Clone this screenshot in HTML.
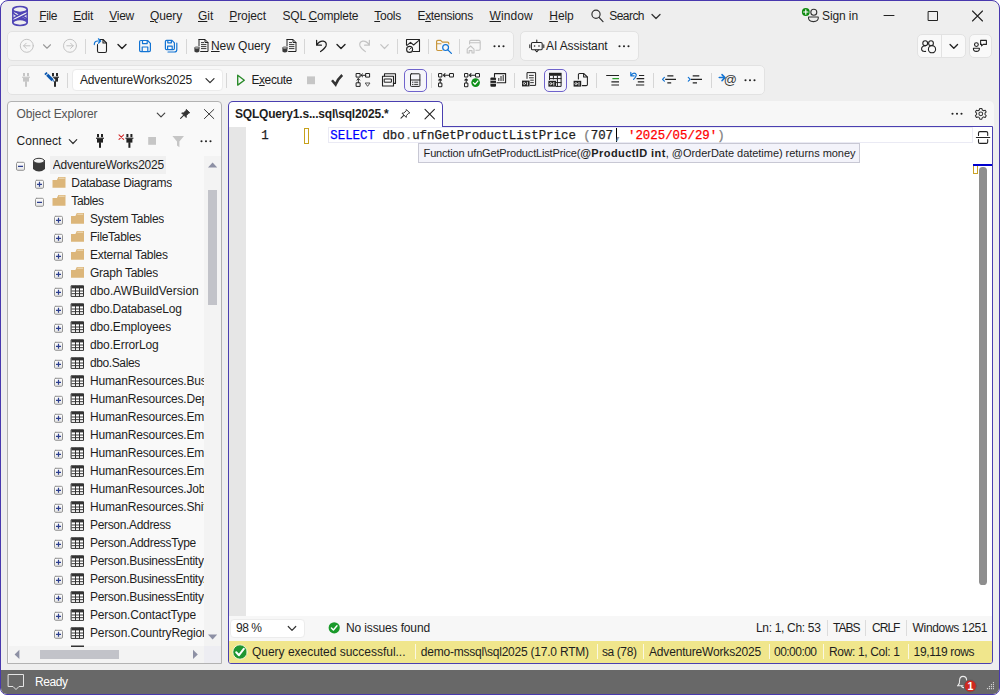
<!DOCTYPE html>
<html lang="en"><head><meta charset="utf-8"><title>SQLQuery1.sql - SSMS</title>
<style>
html,body{margin:0;padding:0;background:#ffffff;}
body{width:1000px;height:695px;overflow:hidden;position:relative;font-family:"Liberation Sans",sans-serif;font-size:12px;color:#1e1e1e;}
#win{position:absolute;left:0;top:0;width:998px;height:693px;border:1px solid #4838ae;border-radius:8px 8px 7px 7px;background:#eeeeee;overflow:hidden;}
#win *{box-sizing:border-box;}
/* every child is positioned in page coordinates: #win content box starts at (1,1) so shift by -1 */
#win > *{position:absolute;margin-left:-1px;margin-top:-1px;}
.t{white-space:pre;display:block;}
.box{background:#f7f7f7;border:1px solid #e2e2e2;border-radius:5px;}
.sep{width:1px;background:#d4d4d4;}
svg{overflow:visible;}
u{text-decoration:underline;text-underline-offset:1px;text-decoration-thickness:1px;}

</style></head><body>
<div id="win">
<div class="box" style="left:7px;top:31px;width:507px;height:30px;"></div>
<div class="box" style="left:520px;top:31px;width:119px;height:30px;"></div>
<div class="box" style="left:7px;top:65px;width:758px;height:30px;"></div>
<div class="box" style="left:917px;top:34px;width:49px;height:24px;background:#f9f9f9;"></div>
<div class="" style="left:941px;top:35px;width:1px;height:22px;background:#e2e2e2;"></div>
<div class="box" style="left:969px;top:34px;width:23px;height:24px;background:#f9f9f9;"></div>
<div class="" style="left:72px;top:69px;width:151px;height:22px;background:#ffffff;border:1px solid #ebebeb;border-radius:4px;"></div>
<div class="" style="left:85px;top:38.5px;width:1px;height:15px;background:#d6d6d6;"></div>
<div class="" style="left:186px;top:38.5px;width:1px;height:15px;background:#d6d6d6;"></div>
<div class="" style="left:304px;top:38.5px;width:1px;height:15px;background:#d6d6d6;"></div>
<div class="" style="left:397px;top:38.5px;width:1px;height:15px;background:#d6d6d6;"></div>
<div class="" style="left:428px;top:38.5px;width:1px;height:15px;background:#d6d6d6;"></div>
<div class="" style="left:459px;top:38.5px;width:1px;height:15px;background:#d6d6d6;"></div>
<div class="" style="left:67px;top:72.5px;width:1px;height:15px;background:#d6d6d6;"></div>
<div class="" style="left:226px;top:72.5px;width:1px;height:15px;background:#d6d6d6;"></div>
<div class="" style="left:403.5px;top:68.5px;width:23.5px;height:23.5px;border:1px solid #6f63cc;border-radius:5px;background:#f5f5fa;"></div>
<div class="" style="left:430.5px;top:72.5px;width:1px;height:15px;background:#d6d6d6;"></div>
<div class="" style="left:513.5px;top:72.5px;width:1px;height:15px;background:#d6d6d6;"></div>
<div class="" style="left:543.5px;top:68.5px;width:23.5px;height:23.5px;border:1px solid #6f63cc;border-radius:5px;background:#f5f5fa;"></div>
<div class="" style="left:596px;top:72.5px;width:1px;height:15px;background:#d6d6d6;"></div>
<div class="" style="left:653px;top:72.5px;width:1px;height:15px;background:#d6d6d6;"></div>
<div class="" style="left:710.5px;top:72.5px;width:1px;height:15px;background:#d6d6d6;"></div>
<div class="" style="left:7px;top:101px;width:215px;height:563px;background:#f9f9f9;border:1px solid #b2b2b2;border-radius:4px 4px 0 0;"></div>
<div class="" style="left:204px;top:156px;width:17px;height:490px;background:#f3f3f3;"></div>
<div class="" style="left:9px;top:646px;width:212px;height:17px;background:#f3f3f3;"></div>
<div class="" style="left:204px;top:646px;width:17px;height:17px;background:#ededf2;"></div>
<div class="" style="left:50px;top:156px;width:116px;height:18px;background:#f0f0f0;"></div>
<div class="" style="left:208px;top:190px;width:9px;height:114.5px;background:#c2c3c9;"></div>
<div class="" style="left:40px;top:650px;width:78.5px;height:9px;background:#c2c3c9;"></div>
<div class="" style="left:228px;top:101px;width:766px;height:26px;background:#f7f7f7;border-radius:5px 5px 0 0;"></div>
<div class="" style="left:228px;top:126px;width:765px;height:538px;background:#ffffff;border:1px solid #4a3fb0;border-radius:0 0 3px 3px;"></div>
<div class="" style="left:228px;top:101px;width:215px;height:26px;background:#ffffff;border:1px solid #4a3fb0;border-bottom:none;border-radius:5px 5px 0 0;"></div>
<div class="" style="left:229px;top:127px;width:17px;height:489px;background:#e6e6e6;"></div>
<div class="" style="left:328px;top:127px;width:645px;height:16px;border:1px solid #eaeaf4;"></div>
<div class="" style="left:304px;top:128px;width:4.6px;height:16px;border:1px solid #c7a11c;"></div>
<div class="" style="left:615.6px;top:128px;width:1px;height:14px;background:#000;"></div>
<div class="" style="left:418px;top:143px;width:442px;height:19.5px;background:#f3f3fa;border:1px solid #c8c8d4;"></div>
<div class="" style="left:973px;top:164px;width:19px;height:2px;background:#0000cd;"></div>
<div class="" style="left:973.4px;top:166px;width:4.6px;height:8px;border:1px solid #c9a227;border-top:none;"></div>
<div class="" style="left:979.4px;top:166.6px;width:7.2px;height:418px;background:#8e8e8e;border-radius:3.6px;"></div>
<div class="" style="left:229px;top:616px;width:763px;height:25px;background:#f7f7f7;"></div>
<div class="" style="left:230px;top:619px;width:74.5px;height:18.5px;background:#ffffff;border:1px solid #ececec;border-radius:4px;"></div>
<div class="" style="left:826.5px;top:620px;width:1px;height:16px;background:#dcdcdc;"></div>
<div class="" style="left:865px;top:620px;width:1px;height:16px;background:#dcdcdc;"></div>
<div class="" style="left:905.5px;top:620px;width:1px;height:16px;background:#dcdcdc;"></div>
<div class="" style="left:229px;top:641px;width:763px;height:22px;background:#f0e68c;border-radius:0 0 2px 2px;"></div>
<div class="" style="left:414.5px;top:644px;width:1px;height:15px;background:#fbf8e2;"></div>
<div class="" style="left:596.5px;top:644px;width:1px;height:15px;background:#fbf8e2;"></div>
<div class="" style="left:643px;top:644px;width:1px;height:15px;background:#fbf8e2;"></div>
<div class="" style="left:768.5px;top:644px;width:1px;height:15px;background:#fbf8e2;"></div>
<div class="" style="left:823px;top:644px;width:1px;height:15px;background:#fbf8e2;"></div>
<div class="" style="left:908px;top:644px;width:1px;height:15px;background:#fbf8e2;"></div>
<div class="" style="left:0px;top:670px;width:1000px;height:25px;background:#686868;"></div>
<svg style="left:0;top:0" width="1000" height="695" viewBox="0 0 1000 695" fill="none" stroke-linecap="round" stroke-linejoin="round">
<defs><linearGradient id="eg" x1="0" y1="0" x2="0" y2="1"><stop offset="0" stop-color="#ffffff"/><stop offset="1" stop-color="#e4e4e4"/></linearGradient></defs>
<path d="M13.4 10.6 Q20 14.2 26.6 10.6 L26.9 13 L20 16 Z" fill="#5046b6" stroke="none"/><path d="M13.4 21.4 Q20 17.8 26.6 21.4 L26.9 19.4 L20 16 L13.1 19.4 Z" fill="#5046b6" stroke="none"/><path d="M12.9 12 Q13.6 14.8 19 16 M27.1 20 Q26.4 17.2 21 16" stroke="#5046b6" stroke-width="1.3"/><path d="M13 19.7 L27 12.3" stroke="#f1f1f1" stroke-width="2.6" stroke-linecap="butt"/><path d="M12.8 18.3 L27.2 10.9 M12.8 21.2 L27.2 13.8" stroke="#5046b6" stroke-width="1.3"/><g stroke="#5046b6" stroke-width="1.5"><ellipse cx="20" cy="9.5" rx="7.2" ry="2.9"/><ellipse cx="20" cy="22.5" rx="7.2" ry="2.9"/><path d="M12.8 9.5 V22.5 M27.2 9.5 V22.5"/></g>
<circle cx="596" cy="14.2" r="4.1" stroke="#333" stroke-width="1.2"/><path d="M599 17.4 L603 21.6" stroke="#333" stroke-width="1.3"/>
<path d="M652 14.5 l4 4 l4 -4" stroke="#333" stroke-width="1.3"/>
<circle cx="813.8" cy="12.3" r="3" stroke="#333" stroke-width="1.1"/><path d="M808.5 17 H818.3 Q818.8 21.6 813.4 21.6 Q808 21.6 808.5 17 Z" stroke="#333" stroke-width="1.1"/><circle cx="805.8" cy="12" r="3.9" fill="#0f8a10" stroke="none"/><path d="M803.6 12 H808 M805.8 9.8 V14.2" stroke="#fff" stroke-width="1.2"/>
<path d="M884 15.5 H894" stroke="#222" stroke-width="1"/><rect x="928.5" y="11.5" width="9" height="9" stroke="#222" stroke-width="1"/><path d="M972.5 11 L982.5 21 M982.5 11 L972.5 21" stroke="#222" stroke-width="1.1"/>
<circle cx="26.8" cy="45.8" r="6.5" stroke="#c4c4c4" stroke-width="1"/>
<path d="M23.6 45.8 H30 M26.2 43.2 L23.6 45.8 L26.2 48.4" stroke="#c4c4c4" stroke-width="1"/>
<circle cx="70" cy="45.8" r="6.5" stroke="#c4c4c4" stroke-width="1"/>
<path d="M66.8 45.8 H73.2 M70.6 43.2 L73.2 45.8 L70.6 48.4" stroke="#c4c4c4" stroke-width="1"/>
<path d="M43.5 44.75 l3.5 3.5 l3.5 -3.5" stroke="#9a9a9a" stroke-width="1.1"/>
<path d="M100 39.5 H103 L106.5 43 V51 Q106.5 52.5 105 52.5 H99 Q97.5 52.5 97.5 51 V44.5" stroke="#222222" stroke-width="1.1"/><path d="M103 39.7 V43 H106.3" stroke="#222222" stroke-width="1.1"/>
<path d="M94.3 44.6 Q94.3 41 97.8 41 H100.4 M98.4 38.8 L100.7 41 L98.4 43.2" stroke="#1374d4" stroke-width="1.2"/>
<path d="M118 44.6 l4 4 l4 -4" stroke="#222" stroke-width="1.4"/>
<g stroke="#1374d4" stroke-width="1.2"><path d="M140.9 40.5 H147.6 L150.4 43.3 V50.3 Q150.4 51.6 149.1 51.6 H140.9 Q139.6 51.6 139.6 50.3 V41.8 Q139.6 40.5 140.9 40.5 Z"/><path d="M142.5 40.7 V43.6 H147.2 V40.7"/><path d="M142.2 51.4 V47 H147.8 V51.4"/></g>
<g stroke="#1374d4" stroke-width="1.2"><path d="M166.6 40.4 H172 L174.4 42.8 V48.4 Q174.4 49.6 173.2 49.6 H166.6 Q165.4 49.6 165.4 48.4 V41.6 Q165.4 40.4 166.6 40.4 Z"/><path d="M167.8 40.6 V42.8 H171.4 V40.6"/><path d="M167.6 49.4 V46.2 H172.2 V49.4"/><path d="M176.8 43.2 V49.4 Q176.8 52 174.2 52 H168"/></g>
<g stroke="#222222" stroke-width="1"><path d="M199 39.5 H205 L208 42.5 V51.5 H200.6"/><path d="M199 39.5 V46"/><path d="M205 39.7 V42.5 H207.8"/><path d="M201 42.6 H204 M201 44.6 H206.4 M201 46.6 H206.4 M201 48.6 H206.4" stroke-width="0.9" stroke-linecap="butt"/></g>
<path d="M194.4 47.8 V51.4 Q196.9 53.4 199.4 51.4 V47.8 Z" fill="#3a3a3a" stroke="none"/><ellipse cx="196.9" cy="47.9" rx="2.5" ry="1.1" fill="#a8a8a8" stroke="#3a3a3a" stroke-width="0.5"/>
<g stroke="#222222" stroke-width="1"><path d="M287 39.5 H293 L296 42.5 V51.5 H288.6"/><path d="M287 39.5 V46"/><path d="M293 39.7 V42.5 H295.8"/><path d="M289 42.6 H292 M289 44.6 H294.4 M289 46.6 H294.4 M289 48.6 H294.4" stroke-width="0.9" stroke-linecap="butt"/></g>
<path d="M282.4 47.8 V51.4 Q284.9 53.4 287.4 51.4 V47.8 Z" fill="#3a3a3a" stroke="none"/><ellipse cx="284.9" cy="47.9" rx="2.5" ry="1.1" fill="#a8a8a8" stroke="#3a3a3a" stroke-width="0.5"/>
<path d="M316.6 40.4 V45.2 H321.4 M316.8 45 Q319.5 40.6 323.3 41.2 Q327.2 42.2 326 46 Q325 48.2 320.6 51.6" stroke="#222222" stroke-width="1.25"/>
<path d="M337 44.6 l4 4 l4 -4" stroke="#222" stroke-width="1.4"/>
<path d="M369.4 40.4 V45.2 H364.6 M369.2 45 Q366.5 40.6 362.7 41.2 Q358.8 42.2 360 46 Q361 48.2 365.4 51.6" stroke="#c4c4c4" stroke-width="1.2"/>
<path d="M380.75 44.7 l3.75 3.8 l3.75 -3.8" stroke="#c4c4c4" stroke-width="1.2"/>
<g stroke="#222222" stroke-width="1.1"><path d="M406.5 45 V39.5 H419.5 V51.5 H413"/><path d="M407 45.4 L410.5 42.4 L413.6 45 L419 40.4"/><circle cx="409.6" cy="49.4" r="3" fill="#f7f7f7"/><path d="M409.6 49.4 L411.2 47.8" stroke-width="0.9"/></g>
<path d="M442 50.5 H437.8 Q436.6 50.5 436.6 49.3 V41.6 Q436.6 40.4 437.8 40.4 H440.6 L442.4 42.2 H447.6 Q448.8 42.2 448.8 43.4 V44" stroke="#c8963c" stroke-width="1.2"/><path d="M436.8 43.8 H441" stroke="#c8963c" stroke-width="1.1"/>
<circle cx="445.6" cy="47.6" r="2.9" stroke="#1374d4" stroke-width="1.2"/><path d="M447.8 49.9 L451.4 53.4" stroke="#1374d4" stroke-width="1.3"/>
<g stroke="#c4c4c4" stroke-width="1.1"><path d="M469.6 44 V41.6 Q469.6 40.4 470.8 40.4 H479 Q480.2 40.4 480.2 41.6 V49 Q480.2 50.2 479 50.2 H476"/><path d="M469.8 42.8 H480"/><path d="M467.2 49.2 L470.6 46 L474 49.2 V53 H472 V50.6 H469.2 V53 H467.2 Z"/></g>
<circle cx="494.5" cy="46.2" r="1.05" fill="#222" stroke="none"/>
<circle cx="499" cy="46.2" r="1.05" fill="#222" stroke="none"/>
<circle cx="503.5" cy="46.2" r="1.05" fill="#222" stroke="none"/>
<g stroke="#222222" stroke-width="1.05"><rect x="531.4" y="42.4" width="10.8" height="7.4" rx="1.4"/><path d="M536.8 42.2 V40 M529.8 44.8 V47.6 M543.8 44.8 V47.6 M535.2 50 L536.8 51.8 L538.4 50"/></g><circle cx="534.6" cy="46" r="0.8" fill="#222222"/><circle cx="539" cy="46" r="0.8" fill="#222222"/>
<circle cx="619.5" cy="46.2" r="1.05" fill="#222" stroke="none"/>
<circle cx="624" cy="46.2" r="1.05" fill="#222" stroke="none"/>
<circle cx="628.5" cy="46.2" r="1.05" fill="#222" stroke="none"/>
<g stroke="#222222" stroke-width="1.1"><circle cx="925.2" cy="43.2" r="2.4"/><circle cx="931" cy="43.2" r="2.4"/><path d="M925.4 45.8 Q921.2 46 921.6 49.4 Q922 51.8 925.6 51.4"/><circle cx="932" cy="49.2" r="3.6" fill="#f9f9f9"/></g>
<path d="M950.05 44.5 l3.75 3.8 l3.75 -3.8" stroke="#222" stroke-width="1.3"/>
<g stroke="#222222" stroke-width="1.1"><circle cx="976.4" cy="44.6" r="1.9"/><path d="M973.4 48.2 H979.4 Q979.6 51.4 976.4 51.4 Q973.2 51.4 973.4 48.2 Z"/><path d="M980.6 40.4 H986.4 V44.4 H983.2 L981.6 45.8 V44.4 H980.6 Z"/></g>
<g fill="#c6c6c6" stroke="none"><rect x="23" y="73" width="2" height="3.2"/><rect x="27" y="73" width="2" height="3.2"/><rect x="22" y="76.7" width="8" height="1.1"/><rect x="23" y="77.6" width="6" height="4"/><rect x="25" y="81.2" width="2" height="5.6"/></g>
<g fill="#2a2a2a" stroke="none"><rect x="52" y="73" width="2" height="3.2"/><rect x="56" y="73" width="2" height="3.2"/><rect x="51" y="76.7" width="8" height="1.1"/><rect x="52" y="77.6" width="6" height="4"/><rect x="54" y="81.2" width="2" height="5.6"/></g>
<path d="M45 72.6 L54 81.6" stroke="#f7f7f7" stroke-width="4.6" stroke-linecap="butt"/><path d="M47.2 74.8 L52.6 80.2" stroke="#0a57b0" stroke-width="3" stroke-linecap="butt"/><path d="M45.4 73 L46.6 74.2" stroke="#0a57b0" stroke-width="3" stroke-linecap="butt"/><path d="M52.9 80.5 L53.7 81.3" stroke="#0a57b0" stroke-width="1.2" stroke-linecap="butt"/>
<path d="M206 78.6 l4 4 l4 -4" stroke="#333" stroke-width="1.3"/>
<path d="M237.7 75.3 L244.3 80.2 L237.7 85.1 Z" stroke="#2c8c2c" stroke-width="1.4"/>
<rect x="307" y="76.4" width="8" height="7.8" fill="#c6c6c6" stroke="none"/>
<path d="M332 80.2 L335.6 84.6 Q338 78.8 342.2 75" stroke="#333" stroke-width="2.5" stroke-linejoin="miter" stroke-linecap="butt"/>
<g stroke="#222222" stroke-width="1"><rect x="356.5" y="73.5" width="3.6" height="3.6"/><rect x="366" y="73.5" width="3.6" height="3.6"/><rect x="356.5" y="82.8" width="3.6" height="3.6"/><path d="M365.8 75.3 H361 M362.6 73.8 L361 75.3 L362.6 76.8 M358.3 82.6 V78.6 M356.9 80 L358.3 78.6 L359.7 80"/><path d="M365.6 83 H370 L367.8 86 Z" stroke="#555"/></g>
<g stroke="#222222" stroke-width="1.1"><path d="M384.5 76 V73.8 H395.5 V83.4 H393.4"/><rect x="382.5" y="76.2" width="11" height="9.8"/><rect x="384.6" y="79" width="6.8" height="3.2" stroke-width="1"/></g>
<g stroke="#222222" stroke-width="1"><rect x="410.5" y="73.8" width="9.4" height="12.6" rx="0.8"/><path d="M410.6 80 H419.8"/><path d="M414.6 82.2 H417.8 M414.6 84.4 H417.8" stroke-width="0.9"/><path d="M412.4 82.2 H413 M412.4 84.4 H413" stroke-width="0.9"/></g>
<g stroke="#222222" stroke-width="1.05"><rect x="438.5" y="73.4" width="3.4" height="3.6" rx="0.8"/><rect x="449.5" y="73.4" width="4" height="3.6" rx="0.8"/><rect x="438.5" y="83" width="3.4" height="3.8" rx="0.8"/><path d="M449.3 75.2 H443.4 M445 73.6 L443.4 75.2 L445 76.8 M440.2 82.8 V78.8 M438.8 80.2 L440.2 78.8 L441.6 80.2"/></g>
<g stroke="#222222" stroke-width="1.05"><rect x="464.5" y="73.4" width="3.4" height="3.6" rx="0.8"/><rect x="475.5" y="73.4" width="4" height="3.6" rx="0.8"/><rect x="464.5" y="83" width="3.4" height="3.8" rx="0.8"/><path d="M475.3 75.2 H469.4 M471 73.6 L469.4 75.2 L471 76.8 M466.2 82.8 V78.8 M464.8 80.2 L466.2 78.8 L467.6 80.2"/></g>
<circle cx="475.6" cy="82.6" r="4.3" fill="#10901a" stroke="none"/><path d="M473.4 82.6 L475 84.3 L477.9 81" stroke="#fff" stroke-width="1.2"/>
<g stroke="#222222" stroke-width="1.1"><path d="M494.5 77 V73.6 H505.6 V82.8 H497"/><path d="M498.8 80.6 V78.4 M501 80.6 V76.4 M503.2 80.6 V75.4" stroke-width="1"/></g><rect x="490.4" y="77.4" width="5.6" height="9.4" rx="1" fill="#222" stroke="none"/><path d="M490.6 80.4 H495.8 M490.6 83.4 H495.8" stroke="#f0f0f0" stroke-width="0.8"/>
<g stroke="#222222" stroke-width="1"><path d="M527 78.4 V72.6 H535.6 V85.4 H530.4"/><path d="M529.4 75.4 H533.4 M529.4 77.8 H533.4 M530.6 80.2 H533.4 M530.6 82.6 H533.4" stroke-width="0.9"/></g>
<rect x="522" y="80.6" width="7.6" height="5.8" fill="#222" stroke="none"/><circle cx="524.4" cy="83.5" r="1.1" stroke="#f4f4f4" stroke-width="0.8"/><path d="M527.4 82.2 V85" stroke="#f4f4f4" stroke-width="0.9"/>
<rect x="549" y="72.8" width="12.6" height="3" fill="#222" stroke="none"/><g stroke="#222222" stroke-width="1"><path d="M549.5 76 V79.6 M561.1 76 V86.4 H556.4 M549.4 78.6 H561 M556 82.6 H561 M553.4 76 V79 M557.4 76 V86.4"/></g>
<rect x="548.4" y="80.8" width="7.6" height="5.8" fill="#222" stroke="none"/><circle cx="550.8" cy="83.7" r="1.1" stroke="#f4f4f4" stroke-width="0.8"/><path d="M553.8 82.4 V85.2" stroke="#f4f4f4" stroke-width="0.9"/>
<g stroke="#222222" stroke-width="1.05"><path d="M578.4 79 V74.6 Q578.4 73.4 579.6 73.4 H583.6 L587.4 77 V84.4 Q587.4 85.6 586.2 85.6 H582.4"/><path d="M583.6 73.6 V77 H587.2"/></g>
<rect x="573.6" y="80.8" width="7.6" height="5.8" fill="#222" stroke="none"/><circle cx="576" cy="83.7" r="1.1" stroke="#f4f4f4" stroke-width="0.8"/><path d="M579 82.4 V85.2" stroke="#f4f4f4" stroke-width="0.9"/>
<path d="M606.2 75.5 H619 M611.4 81.8 H619 M611.4 85 H619" stroke="#222222" stroke-width="1.2" stroke-linecap="butt"/><path d="M612.4 78.6 H619" stroke="#2c9c2c" stroke-width="1.2" stroke-linecap="butt"/>
<path d="M639 75.5 H644.2 M636.6 78.6 H644.2 M637.8 81.8 H644.2 M636 85 H644.2" stroke="#222222" stroke-width="1.2" stroke-linecap="butt"/><path d="M630.8 72.4 V75.8 H634.2 M631 75.6 Q633 72.2 635.6 73.6 Q637.6 75.2 633.6 79.4" stroke="#1374d4" stroke-width="1.2"/>
<path d="M667.3 75.9 H673.4 M665.2 79.3 H676 M667.3 82.9 H671.2" stroke="#222222" stroke-width="1.2" stroke-linecap="butt"/><path d="M664.4 77.4 L662.5 79.3 L664.4 81.2" stroke="#1374d4" stroke-width="1.2"/>
<path d="M692.7 75.9 H699.3 M690.8 79.3 H702 M692.7 82.9 H697" stroke="#222222" stroke-width="1.2" stroke-linecap="butt"/><path d="M688.3 77.4 L690.2 79.3 L688.3 81.2" stroke="#1374d4" stroke-width="1.2"/>
<path d="M719.2 77.6 H724.4 M722 74.6 L725 77.6 L722 80.6" stroke="#1374d4" stroke-width="1.5"/>
<circle cx="745.5" cy="80.2" r="1.05" fill="#222" stroke="none"/>
<circle cx="750" cy="80.2" r="1.05" fill="#222" stroke="none"/>
<circle cx="754.5" cy="80.2" r="1.05" fill="#222" stroke="none"/>
<path d="M157.25 113.1 l3.75 3.8 l3.75 -3.8" stroke="#444" stroke-width="1.2"/>
<path d="M186.6 109.6 L189.8 112.8 L188.6 113.2 L186.4 115.6 L186.2 117.6 L181.6 113 L183.6 112.8 L186 110.6 Z" fill="#333" stroke="#333" stroke-width="0.8"/><path d="M183.6 115.4 L180.6 118.4" stroke="#333" stroke-width="1.1"/>
<path d="M204.4 109.5 L213.8 118.6 M213.8 109.5 L204.4 118.6" stroke="#3a3a3a" stroke-width="1"/>
<path d="M69.25 139.7 l3.75 3.8 l3.75 -3.8" stroke="#333" stroke-width="1.2"/>
<g fill="#222" stroke="none"><rect x="97" y="134" width="2" height="3.2"/><rect x="101" y="134" width="2" height="3.2"/><rect x="96" y="137.7" width="8" height="1.1"/><rect x="97" y="138.6" width="6" height="4"/><rect x="99" y="142.2" width="2" height="5.6"/></g>
<g fill="#222" stroke="none"><rect x="126.4" y="134" width="2" height="3.2"/><rect x="130.4" y="134" width="2" height="3.2"/><rect x="125.4" y="137.7" width="8" height="1.1"/><rect x="126.4" y="138.6" width="6" height="4"/><rect x="128.4" y="142.2" width="2" height="5.6"/></g>
<path d="M119 134.8 L123.6 139.4 M123.6 134.8 L119 139.4" stroke="#d32f2f" stroke-width="1.1"/>
<rect x="148.2" y="137" width="7.8" height="7.8" fill="#c6c6c6" stroke="none"/>
<path d="M172.4 136 H184 L179.4 141.6 V147.2 L177 145.6 V141.6 Z" fill="#c6c6c6" stroke="none"/>
<circle cx="201.5" cy="141.2" r="1.05" fill="#222" stroke="none"/>
<circle cx="206" cy="141.2" r="1.05" fill="#222" stroke="none"/>
<circle cx="210.5" cy="141.2" r="1.05" fill="#222" stroke="none"/>
<rect x="16.5" y="162.3" width="8" height="8" rx="1.2" fill="url(#eg)" stroke="#939393" stroke-width="1"/>
<path d="M18 166.3 H23" stroke="#2d3f8f" stroke-width="1.2" stroke-linecap="butt"/>
<path d="M33 160.6 V169 Q39 174.2 45 169 V160.6 Z" fill="#3a3a3a" stroke="none"/><ellipse cx="39" cy="160.8" rx="5.5" ry="2.5" fill="#f2f2f2" stroke="#3a3a3a" stroke-width="1"/>
<rect x="35.5" y="180.3" width="8" height="8" rx="1.2" fill="url(#eg)" stroke="#939393" stroke-width="1"/>
<path d="M37 184.3 H42 M39.5 181.8 V186.8" stroke="#2d3f8f" stroke-width="1.2" stroke-linecap="butt"/>
<path d="M52.5 180 H56.9 L58.3 177 H65.5 V187.8 H52.5 Z" fill="#dcb67a" stroke="none"/><path d="M58.8 178.2 H64.7" stroke="#f3e3c6" stroke-width="0.9" stroke-linecap="butt"/>
<rect x="35.5" y="198.3" width="8" height="8" rx="1.2" fill="url(#eg)" stroke="#939393" stroke-width="1"/>
<path d="M37 202.3 H42" stroke="#2d3f8f" stroke-width="1.2" stroke-linecap="butt"/>
<path d="M52.5 198 H56.9 L58.3 195 H65.5 V205.8 H52.5 Z" fill="#dcb67a" stroke="none"/><path d="M58.8 196.2 H64.7" stroke="#f3e3c6" stroke-width="0.9" stroke-linecap="butt"/>
<rect x="54.5" y="216.3" width="8" height="8" rx="1.2" fill="url(#eg)" stroke="#939393" stroke-width="1"/>
<path d="M56 220.3 H61 M58.5 217.8 V222.8" stroke="#2d3f8f" stroke-width="1.2" stroke-linecap="butt"/>
<path d="M71 216 H75.4 L76.8 213 H84 V223.8 H71 Z" fill="#dcb67a" stroke="none"/><path d="M77.3 214.2 H83.2" stroke="#f3e3c6" stroke-width="0.9" stroke-linecap="butt"/>
<rect x="54.5" y="234.3" width="8" height="8" rx="1.2" fill="url(#eg)" stroke="#939393" stroke-width="1"/>
<path d="M56 238.3 H61 M58.5 235.8 V240.8" stroke="#2d3f8f" stroke-width="1.2" stroke-linecap="butt"/>
<path d="M71 234 H75.4 L76.8 231 H84 V241.8 H71 Z" fill="#dcb67a" stroke="none"/><path d="M77.3 232.2 H83.2" stroke="#f3e3c6" stroke-width="0.9" stroke-linecap="butt"/>
<rect x="54.5" y="252.3" width="8" height="8" rx="1.2" fill="url(#eg)" stroke="#939393" stroke-width="1"/>
<path d="M56 256.3 H61 M58.5 253.8 V258.8" stroke="#2d3f8f" stroke-width="1.2" stroke-linecap="butt"/>
<path d="M71 252 H75.4 L76.8 249 H84 V259.8 H71 Z" fill="#dcb67a" stroke="none"/><path d="M77.3 250.2 H83.2" stroke="#f3e3c6" stroke-width="0.9" stroke-linecap="butt"/>
<rect x="54.5" y="270.3" width="8" height="8" rx="1.2" fill="url(#eg)" stroke="#939393" stroke-width="1"/>
<path d="M56 274.3 H61 M58.5 271.8 V276.8" stroke="#2d3f8f" stroke-width="1.2" stroke-linecap="butt"/>
<path d="M71 270 H75.4 L76.8 267 H84 V277.8 H71 Z" fill="#dcb67a" stroke="none"/><path d="M77.3 268.2 H83.2" stroke="#f3e3c6" stroke-width="0.9" stroke-linecap="butt"/>
<rect x="54.5" y="288.3" width="8" height="8" rx="1.2" fill="url(#eg)" stroke="#939393" stroke-width="1"/>
<path d="M56 292.3 H61 M58.5 289.8 V294.8" stroke="#2d3f8f" stroke-width="1.2" stroke-linecap="butt"/>
<rect x="71.5" y="285.8" width="12" height="10.6" fill="#fff" stroke="#333" stroke-width="1"/><rect x="71.5" y="285.8" width="12" height="2.6" fill="#333" stroke="none"/><path d="M75.5 285.8 V296.4 M79.5 285.8 V296.4 M71.5 291 H83.5 M71.5 293.7 H83.5" stroke="#333" stroke-width="1" stroke-linecap="butt"/>
<rect x="54.5" y="306.3" width="8" height="8" rx="1.2" fill="url(#eg)" stroke="#939393" stroke-width="1"/>
<path d="M56 310.3 H61 M58.5 307.8 V312.8" stroke="#2d3f8f" stroke-width="1.2" stroke-linecap="butt"/>
<rect x="71.5" y="303.8" width="12" height="10.6" fill="#fff" stroke="#333" stroke-width="1"/><rect x="71.5" y="303.8" width="12" height="2.6" fill="#333" stroke="none"/><path d="M75.5 303.8 V314.4 M79.5 303.8 V314.4 M71.5 309 H83.5 M71.5 311.7 H83.5" stroke="#333" stroke-width="1" stroke-linecap="butt"/>
<rect x="54.5" y="324.3" width="8" height="8" rx="1.2" fill="url(#eg)" stroke="#939393" stroke-width="1"/>
<path d="M56 328.3 H61 M58.5 325.8 V330.8" stroke="#2d3f8f" stroke-width="1.2" stroke-linecap="butt"/>
<rect x="71.5" y="321.8" width="12" height="10.6" fill="#fff" stroke="#333" stroke-width="1"/><rect x="71.5" y="321.8" width="12" height="2.6" fill="#333" stroke="none"/><path d="M75.5 321.8 V332.4 M79.5 321.8 V332.4 M71.5 327 H83.5 M71.5 329.7 H83.5" stroke="#333" stroke-width="1" stroke-linecap="butt"/>
<rect x="54.5" y="342.3" width="8" height="8" rx="1.2" fill="url(#eg)" stroke="#939393" stroke-width="1"/>
<path d="M56 346.3 H61 M58.5 343.8 V348.8" stroke="#2d3f8f" stroke-width="1.2" stroke-linecap="butt"/>
<rect x="71.5" y="339.8" width="12" height="10.6" fill="#fff" stroke="#333" stroke-width="1"/><rect x="71.5" y="339.8" width="12" height="2.6" fill="#333" stroke="none"/><path d="M75.5 339.8 V350.4 M79.5 339.8 V350.4 M71.5 345 H83.5 M71.5 347.7 H83.5" stroke="#333" stroke-width="1" stroke-linecap="butt"/>
<rect x="54.5" y="360.3" width="8" height="8" rx="1.2" fill="url(#eg)" stroke="#939393" stroke-width="1"/>
<path d="M56 364.3 H61 M58.5 361.8 V366.8" stroke="#2d3f8f" stroke-width="1.2" stroke-linecap="butt"/>
<rect x="71.5" y="357.8" width="12" height="10.6" fill="#fff" stroke="#333" stroke-width="1"/><rect x="71.5" y="357.8" width="12" height="2.6" fill="#333" stroke="none"/><path d="M75.5 357.8 V368.4 M79.5 357.8 V368.4 M71.5 363 H83.5 M71.5 365.7 H83.5" stroke="#333" stroke-width="1" stroke-linecap="butt"/>
<rect x="54.5" y="378.3" width="8" height="8" rx="1.2" fill="url(#eg)" stroke="#939393" stroke-width="1"/>
<path d="M56 382.3 H61 M58.5 379.8 V384.8" stroke="#2d3f8f" stroke-width="1.2" stroke-linecap="butt"/>
<rect x="71.5" y="375.8" width="12" height="10.6" fill="#fff" stroke="#333" stroke-width="1"/><rect x="71.5" y="375.8" width="12" height="2.6" fill="#333" stroke="none"/><path d="M75.5 375.8 V386.4 M79.5 375.8 V386.4 M71.5 381 H83.5 M71.5 383.7 H83.5" stroke="#333" stroke-width="1" stroke-linecap="butt"/>
<rect x="54.5" y="396.3" width="8" height="8" rx="1.2" fill="url(#eg)" stroke="#939393" stroke-width="1"/>
<path d="M56 400.3 H61 M58.5 397.8 V402.8" stroke="#2d3f8f" stroke-width="1.2" stroke-linecap="butt"/>
<rect x="71.5" y="393.8" width="12" height="10.6" fill="#fff" stroke="#333" stroke-width="1"/><rect x="71.5" y="393.8" width="12" height="2.6" fill="#333" stroke="none"/><path d="M75.5 393.8 V404.4 M79.5 393.8 V404.4 M71.5 399 H83.5 M71.5 401.7 H83.5" stroke="#333" stroke-width="1" stroke-linecap="butt"/>
<rect x="54.5" y="414.3" width="8" height="8" rx="1.2" fill="url(#eg)" stroke="#939393" stroke-width="1"/>
<path d="M56 418.3 H61 M58.5 415.8 V420.8" stroke="#2d3f8f" stroke-width="1.2" stroke-linecap="butt"/>
<rect x="71.5" y="411.8" width="12" height="10.6" fill="#fff" stroke="#333" stroke-width="1"/><rect x="71.5" y="411.8" width="12" height="2.6" fill="#333" stroke="none"/><path d="M75.5 411.8 V422.4 M79.5 411.8 V422.4 M71.5 417 H83.5 M71.5 419.7 H83.5" stroke="#333" stroke-width="1" stroke-linecap="butt"/>
<rect x="54.5" y="432.3" width="8" height="8" rx="1.2" fill="url(#eg)" stroke="#939393" stroke-width="1"/>
<path d="M56 436.3 H61 M58.5 433.8 V438.8" stroke="#2d3f8f" stroke-width="1.2" stroke-linecap="butt"/>
<rect x="71.5" y="429.8" width="12" height="10.6" fill="#fff" stroke="#333" stroke-width="1"/><rect x="71.5" y="429.8" width="12" height="2.6" fill="#333" stroke="none"/><path d="M75.5 429.8 V440.4 M79.5 429.8 V440.4 M71.5 435 H83.5 M71.5 437.7 H83.5" stroke="#333" stroke-width="1" stroke-linecap="butt"/>
<rect x="54.5" y="450.3" width="8" height="8" rx="1.2" fill="url(#eg)" stroke="#939393" stroke-width="1"/>
<path d="M56 454.3 H61 M58.5 451.8 V456.8" stroke="#2d3f8f" stroke-width="1.2" stroke-linecap="butt"/>
<rect x="71.5" y="447.8" width="12" height="10.6" fill="#fff" stroke="#333" stroke-width="1"/><rect x="71.5" y="447.8" width="12" height="2.6" fill="#333" stroke="none"/><path d="M75.5 447.8 V458.4 M79.5 447.8 V458.4 M71.5 453 H83.5 M71.5 455.7 H83.5" stroke="#333" stroke-width="1" stroke-linecap="butt"/>
<rect x="54.5" y="468.3" width="8" height="8" rx="1.2" fill="url(#eg)" stroke="#939393" stroke-width="1"/>
<path d="M56 472.3 H61 M58.5 469.8 V474.8" stroke="#2d3f8f" stroke-width="1.2" stroke-linecap="butt"/>
<rect x="71.5" y="465.8" width="12" height="10.6" fill="#fff" stroke="#333" stroke-width="1"/><rect x="71.5" y="465.8" width="12" height="2.6" fill="#333" stroke="none"/><path d="M75.5 465.8 V476.4 M79.5 465.8 V476.4 M71.5 471 H83.5 M71.5 473.7 H83.5" stroke="#333" stroke-width="1" stroke-linecap="butt"/>
<rect x="54.5" y="486.3" width="8" height="8" rx="1.2" fill="url(#eg)" stroke="#939393" stroke-width="1"/>
<path d="M56 490.3 H61 M58.5 487.8 V492.8" stroke="#2d3f8f" stroke-width="1.2" stroke-linecap="butt"/>
<rect x="71.5" y="483.8" width="12" height="10.6" fill="#fff" stroke="#333" stroke-width="1"/><rect x="71.5" y="483.8" width="12" height="2.6" fill="#333" stroke="none"/><path d="M75.5 483.8 V494.4 M79.5 483.8 V494.4 M71.5 489 H83.5 M71.5 491.7 H83.5" stroke="#333" stroke-width="1" stroke-linecap="butt"/>
<rect x="54.5" y="504.3" width="8" height="8" rx="1.2" fill="url(#eg)" stroke="#939393" stroke-width="1"/>
<path d="M56 508.3 H61 M58.5 505.8 V510.8" stroke="#2d3f8f" stroke-width="1.2" stroke-linecap="butt"/>
<rect x="71.5" y="501.8" width="12" height="10.6" fill="#fff" stroke="#333" stroke-width="1"/><rect x="71.5" y="501.8" width="12" height="2.6" fill="#333" stroke="none"/><path d="M75.5 501.8 V512.4 M79.5 501.8 V512.4 M71.5 507 H83.5 M71.5 509.7 H83.5" stroke="#333" stroke-width="1" stroke-linecap="butt"/>
<rect x="54.5" y="522.3" width="8" height="8" rx="1.2" fill="url(#eg)" stroke="#939393" stroke-width="1"/>
<path d="M56 526.3 H61 M58.5 523.8 V528.8" stroke="#2d3f8f" stroke-width="1.2" stroke-linecap="butt"/>
<rect x="71.5" y="519.8" width="12" height="10.6" fill="#fff" stroke="#333" stroke-width="1"/><rect x="71.5" y="519.8" width="12" height="2.6" fill="#333" stroke="none"/><path d="M75.5 519.8 V530.4 M79.5 519.8 V530.4 M71.5 525 H83.5 M71.5 527.7 H83.5" stroke="#333" stroke-width="1" stroke-linecap="butt"/>
<rect x="54.5" y="540.3" width="8" height="8" rx="1.2" fill="url(#eg)" stroke="#939393" stroke-width="1"/>
<path d="M56 544.3 H61 M58.5 541.8 V546.8" stroke="#2d3f8f" stroke-width="1.2" stroke-linecap="butt"/>
<rect x="71.5" y="537.8" width="12" height="10.6" fill="#fff" stroke="#333" stroke-width="1"/><rect x="71.5" y="537.8" width="12" height="2.6" fill="#333" stroke="none"/><path d="M75.5 537.8 V548.4 M79.5 537.8 V548.4 M71.5 543 H83.5 M71.5 545.7 H83.5" stroke="#333" stroke-width="1" stroke-linecap="butt"/>
<rect x="54.5" y="558.3" width="8" height="8" rx="1.2" fill="url(#eg)" stroke="#939393" stroke-width="1"/>
<path d="M56 562.3 H61 M58.5 559.8 V564.8" stroke="#2d3f8f" stroke-width="1.2" stroke-linecap="butt"/>
<rect x="71.5" y="555.8" width="12" height="10.6" fill="#fff" stroke="#333" stroke-width="1"/><rect x="71.5" y="555.8" width="12" height="2.6" fill="#333" stroke="none"/><path d="M75.5 555.8 V566.4 M79.5 555.8 V566.4 M71.5 561 H83.5 M71.5 563.7 H83.5" stroke="#333" stroke-width="1" stroke-linecap="butt"/>
<rect x="54.5" y="576.3" width="8" height="8" rx="1.2" fill="url(#eg)" stroke="#939393" stroke-width="1"/>
<path d="M56 580.3 H61 M58.5 577.8 V582.8" stroke="#2d3f8f" stroke-width="1.2" stroke-linecap="butt"/>
<rect x="71.5" y="573.8" width="12" height="10.6" fill="#fff" stroke="#333" stroke-width="1"/><rect x="71.5" y="573.8" width="12" height="2.6" fill="#333" stroke="none"/><path d="M75.5 573.8 V584.4 M79.5 573.8 V584.4 M71.5 579 H83.5 M71.5 581.7 H83.5" stroke="#333" stroke-width="1" stroke-linecap="butt"/>
<rect x="54.5" y="594.3" width="8" height="8" rx="1.2" fill="url(#eg)" stroke="#939393" stroke-width="1"/>
<path d="M56 598.3 H61 M58.5 595.8 V600.8" stroke="#2d3f8f" stroke-width="1.2" stroke-linecap="butt"/>
<rect x="71.5" y="591.8" width="12" height="10.6" fill="#fff" stroke="#333" stroke-width="1"/><rect x="71.5" y="591.8" width="12" height="2.6" fill="#333" stroke="none"/><path d="M75.5 591.8 V602.4 M79.5 591.8 V602.4 M71.5 597 H83.5 M71.5 599.7 H83.5" stroke="#333" stroke-width="1" stroke-linecap="butt"/>
<rect x="54.5" y="612.3" width="8" height="8" rx="1.2" fill="url(#eg)" stroke="#939393" stroke-width="1"/>
<path d="M56 616.3 H61 M58.5 613.8 V618.8" stroke="#2d3f8f" stroke-width="1.2" stroke-linecap="butt"/>
<rect x="71.5" y="609.8" width="12" height="10.6" fill="#fff" stroke="#333" stroke-width="1"/><rect x="71.5" y="609.8" width="12" height="2.6" fill="#333" stroke="none"/><path d="M75.5 609.8 V620.4 M79.5 609.8 V620.4 M71.5 615 H83.5 M71.5 617.7 H83.5" stroke="#333" stroke-width="1" stroke-linecap="butt"/>
<rect x="54.5" y="630.3" width="8" height="8" rx="1.2" fill="url(#eg)" stroke="#939393" stroke-width="1"/>
<path d="M56 634.3 H61 M58.5 631.8 V636.8" stroke="#2d3f8f" stroke-width="1.2" stroke-linecap="butt"/>
<rect x="71.5" y="627.8" width="12" height="10.6" fill="#fff" stroke="#333" stroke-width="1"/><rect x="71.5" y="627.8" width="12" height="2.6" fill="#333" stroke="none"/><path d="M75.5 627.8 V638.4 M79.5 627.8 V638.4 M71.5 633 H83.5 M71.5 635.7 H83.5" stroke="#333" stroke-width="1" stroke-linecap="butt"/>
<rect x="71" y="645.5" width="13" height="1.5" fill="#333" stroke="none"/>
<path d="M208 167.4 L212.6 162.6 L217.2 167.4 Z" fill="#8d90a4" stroke="none"/><path d="M208 634.6 L212.6 639.4 L217.2 634.6 Z" fill="#8d90a4" stroke="none"/>
<path d="M19.4 649.8 L14.6 654.4 L19.4 659 Z" fill="#8d90a4" stroke="none"/><path d="M193 649.8 L197.8 654.4 L193 659 Z" fill="#8d90a4" stroke="none"/>
<path d="M406.6 109.8 L409.8 113 L408.4 113.4 L406.4 115.6 L406.2 117.4 L402 113.2 L403.8 113 L406 111 Z" stroke="#333" stroke-width="1"/><path d="M403.8 115.4 L401 118.2" stroke="#333" stroke-width="1.1"/>
<path d="M425 109.4 L434.4 118.8 M434.4 109.4 L425 118.8" stroke="#222" stroke-width="1.1"/>
<circle cx="952.5" cy="113.8" r="1.05" fill="#222" stroke="none"/>
<circle cx="957" cy="113.8" r="1.05" fill="#222" stroke="none"/>
<circle cx="961.5" cy="113.8" r="1.05" fill="#222" stroke="none"/>
<g stroke="#333" stroke-width="1.05"><circle cx="980.8" cy="113.8" r="1.9"/><path d="M979.8 108.4 H981.8 L982.3 110 L983.6 110.7 L985.2 110.2 L986.2 111.9 L985 113.1 V114.5 L986.2 115.7 L985.2 117.4 L983.6 116.9 L982.3 117.6 L981.8 119.2 H979.8 L979.3 117.6 L978 116.9 L976.4 117.4 L975.4 115.7 L976.6 114.5 V113.1 L975.4 111.9 L976.4 110.2 L978 110.7 L979.3 110 Z"/></g>
<g stroke="#222" stroke-width="1.1"><path d="M978.5 135.4 V133 Q978.5 131.6 979.9 131.6 H986.3 Q987.7 131.6 987.7 133 V135.4 M978.5 139.6 V142 Q978.5 143.4 979.9 143.4 H986.3 Q987.7 143.4 987.7 142 V139.6 M976.4 137.5 H989.8"/></g>
<path d="M288.25 626.5 l3.75 3.8 l3.75 -3.8" stroke="#333" stroke-width="1.2"/>
<circle cx="334.2" cy="627.8" r="5.6" fill="#1a9a2a" stroke="none"/><path d="M331.4 627.9 L333.4 630 L337 625.8" stroke="#fff" stroke-width="1.4"/>
<circle cx="240" cy="652" r="7.2" fill="#1e9632" stroke="#fbf8e0" stroke-width="0.9"/><path d="M236.2 652.2 L239 655.2 L243.8 648.8" stroke="#fff" stroke-width="2"/>
<path d="M8.5 674.5 H23.5 V686.5 H19 L16 689.5 L13 686.5 H8.5 Z" stroke="#e4e4e4" stroke-width="1" stroke-linejoin="miter"/>
<path d="M957.8 685.6 Q959.8 684 959.6 680.6 Q959.6 676.4 963 676.4 Q966.4 676.4 966.6 680 M961.6 686 Q961.8 687.8 963.6 687.6" stroke="#ececec" stroke-width="1.1"/><path d="M957.8 685.8 H963" stroke="#ececec" stroke-width="1.1"/>
<circle cx="970.3" cy="686" r="6" fill="#d0281e" stroke="#5a5a5a" stroke-width="0.7"/>
<rect x="992.9" y="688.1" width="1.1" height="1.1" fill="#dcdcdc" stroke="none"/>
<rect x="990.9" y="688.1" width="1.1" height="1.1" fill="#dcdcdc" stroke="none"/>
<rect x="988.9" y="688.1" width="1.1" height="1.1" fill="#dcdcdc" stroke="none"/>
<rect x="986.9" y="688.1" width="1.1" height="1.1" fill="#dcdcdc" stroke="none"/>
<rect x="992.9" y="686.1" width="1.1" height="1.1" fill="#dcdcdc" stroke="none"/>
<rect x="990.9" y="686.1" width="1.1" height="1.1" fill="#dcdcdc" stroke="none"/>
<rect x="988.9" y="686.1" width="1.1" height="1.1" fill="#dcdcdc" stroke="none"/>
<rect x="992.9" y="684.1" width="1.1" height="1.1" fill="#dcdcdc" stroke="none"/>
<rect x="990.9" y="684.1" width="1.1" height="1.1" fill="#dcdcdc" stroke="none"/>
<rect x="992.9" y="682.1" width="1.1" height="1.1" fill="#dcdcdc" stroke="none"/>
</svg>
<span class="t" style='left:39.3px;top:8px;font-size:12px;line-height:16px;color:#1e1e1e;font-family:"Liberation Sans", sans-serif;letter-spacing:-0.365px;'><u>F</u>ile</span>
<span class="t" style='left:73.3px;top:8px;font-size:12px;line-height:16px;color:#1e1e1e;font-family:"Liberation Sans", sans-serif;letter-spacing:-0.201px;'><u>E</u>dit</span>
<span class="t" style='left:109.3px;top:8px;font-size:12px;line-height:16px;color:#1e1e1e;font-family:"Liberation Sans", sans-serif;letter-spacing:-0.278px;'><u>V</u>iew</span>
<span class="t" style='left:150px;top:8px;font-size:12px;line-height:16px;color:#1e1e1e;font-family:"Liberation Sans", sans-serif;letter-spacing:-0.138px;'><u>Q</u>uery</span>
<span class="t" style='left:198px;top:8px;font-size:12px;line-height:16px;color:#1e1e1e;font-family:"Liberation Sans", sans-serif;letter-spacing:-0.015px;'><u>G</u>it</span>
<span class="t" style='left:229.3px;top:8px;font-size:12px;line-height:16px;color:#1e1e1e;font-family:"Liberation Sans", sans-serif;letter-spacing:-0.094px;'><u>P</u>roject</span>
<span class="t" style='left:282.5px;top:8px;font-size:12px;line-height:16px;color:#1e1e1e;font-family:"Liberation Sans", sans-serif;letter-spacing:-0.207px;'>SQL <u>C</u>omplete</span>
<span class="t" style='left:374.3px;top:8px;font-size:12px;line-height:16px;color:#1e1e1e;font-family:"Liberation Sans", sans-serif;letter-spacing:-0.263px;'><u>T</u>ools</span>
<span class="t" style='left:417.5px;top:8px;font-size:12px;line-height:16px;color:#1e1e1e;font-family:"Liberation Sans", sans-serif;letter-spacing:-0.342px;'>E<u>x</u>tensions</span>
<span class="t" style='left:489.5px;top:8px;font-size:12px;line-height:16px;color:#1e1e1e;font-family:"Liberation Sans", sans-serif;letter-spacing:0.102px;'><u>W</u>indow</span>
<span class="t" style='left:549.3px;top:8px;font-size:12px;line-height:16px;color:#1e1e1e;font-family:"Liberation Sans", sans-serif;letter-spacing:-0.097px;'><u>H</u>elp</span>
<span class="t" style='left:609.3px;top:8px;font-size:12px;line-height:16px;color:#1e1e1e;font-family:"Liberation Sans", sans-serif;letter-spacing:-0.555px;'>Search</span>
<span class="t" style='left:822px;top:8px;font-size:12px;line-height:16px;color:#1e1e1e;font-family:"Liberation Sans", sans-serif;letter-spacing:-0.100px;'>Sign in</span>
<span class="t" style='left:211px;top:38px;font-size:12px;line-height:16px;color:#1e1e1e;font-family:"Liberation Sans", sans-serif;letter-spacing:-0.059px;'><u>N</u>ew Query</span>
<span class="t" style='left:546px;top:38px;font-size:12px;line-height:16px;color:#1e1e1e;font-family:"Liberation Sans", sans-serif;letter-spacing:-0.100px;'>AI Assistant</span>
<span class="t" style='left:80px;top:72px;font-size:12px;line-height:16px;color:#1e1e1e;font-family:"Liberation Sans", sans-serif;letter-spacing:-0.177px;'>AdventureWorks2025</span>
<span class="t" style='left:251.4px;top:72px;font-size:12px;line-height:16px;color:#1e1e1e;font-family:"Liberation Sans", sans-serif;letter-spacing:-0.396px;'>E<u>x</u>ecute</span>
<span class="t" style='left:723.8px;top:72.2px;font-size:13px;line-height:16px;color:#3a3a3a;font-family:"Liberation Sans", sans-serif;'>@</span>
<span class="t" style='left:16.5px;top:106px;font-size:12px;line-height:16px;color:#555555;font-family:"Liberation Sans", sans-serif;letter-spacing:-0.114px;'>Object Explorer</span>
<span class="t" style='left:16.5px;top:133px;font-size:12px;line-height:16px;color:#1e1e1e;font-family:"Liberation Sans", sans-serif;letter-spacing:0.042px;'>Connect</span>
<span class="t" style='left:52.7px;top:156.5px;font-size:12px;line-height:16px;color:#1e1e1e;font-family:"Liberation Sans", sans-serif;letter-spacing:-0.216px;max-width:151.5px;overflow:hidden;'>AdventureWorks2025</span>
<span class="t" style='left:71.3px;top:174.5px;font-size:12px;line-height:16px;color:#1e1e1e;font-family:"Liberation Sans", sans-serif;letter-spacing:-0.315px;max-width:132.9px;overflow:hidden;'>Database Diagrams</span>
<span class="t" style='left:71.3px;top:192.5px;font-size:12px;line-height:16px;color:#1e1e1e;font-family:"Liberation Sans", sans-serif;letter-spacing:-0.398px;max-width:132.9px;overflow:hidden;'>Tables</span>
<span class="t" style='left:90px;top:210.5px;font-size:12px;line-height:16px;color:#1e1e1e;font-family:"Liberation Sans", sans-serif;letter-spacing:-0.293px;max-width:114.2px;overflow:hidden;'>System Tables</span>
<span class="t" style='left:90px;top:228.5px;font-size:12px;line-height:16px;color:#1e1e1e;font-family:"Liberation Sans", sans-serif;letter-spacing:-0.303px;max-width:114.2px;overflow:hidden;'>FileTables</span>
<span class="t" style='left:90px;top:246.5px;font-size:12px;line-height:16px;color:#1e1e1e;font-family:"Liberation Sans", sans-serif;letter-spacing:-0.275px;max-width:114.2px;overflow:hidden;'>External Tables</span>
<span class="t" style='left:90px;top:264.5px;font-size:12px;line-height:16px;color:#1e1e1e;font-family:"Liberation Sans", sans-serif;letter-spacing:-0.263px;max-width:114.2px;overflow:hidden;'>Graph Tables</span>
<span class="t" style='left:90px;top:282.5px;font-size:12px;line-height:16px;color:#1e1e1e;font-family:"Liberation Sans", sans-serif;letter-spacing:-0.014px;max-width:114.2px;overflow:hidden;'>dbo.AWBuildVersion</span>
<span class="t" style='left:90px;top:300.5px;font-size:12px;line-height:16px;color:#1e1e1e;font-family:"Liberation Sans", sans-serif;letter-spacing:-0.203px;max-width:114.2px;overflow:hidden;'>dbo.DatabaseLog</span>
<span class="t" style='left:90px;top:318.5px;font-size:12px;line-height:16px;color:#1e1e1e;font-family:"Liberation Sans", sans-serif;letter-spacing:-0.132px;max-width:114.2px;overflow:hidden;'>dbo.Employees</span>
<span class="t" style='left:90px;top:336.5px;font-size:12px;line-height:16px;color:#1e1e1e;font-family:"Liberation Sans", sans-serif;letter-spacing:-0.121px;max-width:114.2px;overflow:hidden;'>dbo.ErrorLog</span>
<span class="t" style='left:90px;top:354.5px;font-size:12px;line-height:16px;color:#1e1e1e;font-family:"Liberation Sans", sans-serif;letter-spacing:-0.397px;max-width:114.2px;overflow:hidden;'>dbo.Sales</span>
<span class="t" style='left:90px;top:372.5px;font-size:12px;line-height:16px;color:#1e1e1e;font-family:"Liberation Sans", sans-serif;letter-spacing:-0.192px;max-width:114.2px;overflow:hidden;'>HumanResources.BusinessUnit</span>
<span class="t" style='left:90px;top:390.5px;font-size:12px;line-height:16px;color:#1e1e1e;font-family:"Liberation Sans", sans-serif;letter-spacing:-0.192px;max-width:114.2px;overflow:hidden;'>HumanResources.Department</span>
<span class="t" style='left:90px;top:408.5px;font-size:12px;line-height:16px;color:#1e1e1e;font-family:"Liberation Sans", sans-serif;letter-spacing:-0.192px;max-width:114.2px;overflow:hidden;'>HumanResources.Employee</span>
<span class="t" style='left:90px;top:426.5px;font-size:12px;line-height:16px;color:#1e1e1e;font-family:"Liberation Sans", sans-serif;letter-spacing:-0.192px;max-width:114.2px;overflow:hidden;'>HumanResources.EmployeeDepartmentHistory</span>
<span class="t" style='left:90px;top:444.5px;font-size:12px;line-height:16px;color:#1e1e1e;font-family:"Liberation Sans", sans-serif;letter-spacing:-0.192px;max-width:114.2px;overflow:hidden;'>HumanResources.EmployeePayHistory</span>
<span class="t" style='left:90px;top:462.5px;font-size:12px;line-height:16px;color:#1e1e1e;font-family:"Liberation Sans", sans-serif;letter-spacing:-0.192px;max-width:114.2px;overflow:hidden;'>HumanResources.EmployeeReview</span>
<span class="t" style='left:90px;top:480.5px;font-size:12px;line-height:16px;color:#1e1e1e;font-family:"Liberation Sans", sans-serif;letter-spacing:-0.192px;max-width:114.2px;overflow:hidden;'>HumanResources.JobCandidate</span>
<span class="t" style='left:90px;top:498.5px;font-size:12px;line-height:16px;color:#1e1e1e;font-family:"Liberation Sans", sans-serif;letter-spacing:-0.192px;max-width:114.2px;overflow:hidden;'>HumanResources.Shift</span>
<span class="t" style='left:90px;top:516.5px;font-size:12px;line-height:16px;color:#1e1e1e;font-family:"Liberation Sans", sans-serif;letter-spacing:-0.328px;max-width:114.2px;overflow:hidden;'>Person.Address</span>
<span class="t" style='left:90px;top:534.5px;font-size:12px;line-height:16px;color:#1e1e1e;font-family:"Liberation Sans", sans-serif;letter-spacing:-0.300px;max-width:114.2px;overflow:hidden;'>Person.AddressType</span>
<span class="t" style='left:90px;top:552.5px;font-size:12px;line-height:16px;color:#1e1e1e;font-family:"Liberation Sans", sans-serif;letter-spacing:-0.308px;max-width:114.2px;overflow:hidden;'>Person.BusinessEntity</span>
<span class="t" style='left:90px;top:570.5px;font-size:12px;line-height:16px;color:#1e1e1e;font-family:"Liberation Sans", sans-serif;letter-spacing:-0.308px;max-width:114.2px;overflow:hidden;'>Person.BusinessEntityAddress</span>
<span class="t" style='left:90px;top:588.5px;font-size:12px;line-height:16px;color:#1e1e1e;font-family:"Liberation Sans", sans-serif;letter-spacing:-0.308px;max-width:114.2px;overflow:hidden;'>Person.BusinessEntityContact</span>
<span class="t" style='left:90px;top:606.5px;font-size:12px;line-height:16px;color:#1e1e1e;font-family:"Liberation Sans", sans-serif;letter-spacing:-0.152px;max-width:114.2px;overflow:hidden;'>Person.ContactType</span>
<span class="t" style='left:90px;top:624.5px;font-size:12px;line-height:16px;color:#1e1e1e;font-family:"Liberation Sans", sans-serif;letter-spacing:-0.139px;max-width:114.2px;overflow:hidden;'>Person.CountryRegion</span>
<span class="t" style='left:235px;top:106px;font-size:12px;line-height:16px;color:#1e1e1e;font-family:"Liberation Sans", sans-serif;font-weight:700;letter-spacing:-0.194px;'>SQLQuery1.s...sql\sql2025.*</span>
<span class="t" style='left:330.3px;top:127.7px;font-size:12.4px;line-height:16px;color:#1e1e1e;font-family:"Liberation Mono", monospace;letter-spacing:0.003px;-webkit-text-stroke:0.25px;'><span style="color:#0000ff">SELECT</span><span style="color:#000"> </span><span style="color:#1e1e1e">dbo</span><span style="color:#808080">.</span><span style="color:#1e1e1e">ufnGetProductListPrice</span><span style="color:#000"> </span><span style="color:#808080">(</span><span style="color:#1e1e1e">707</span><span style="color:#808080;position:relative;left:1.6px">,</span><span style="color:#000"> </span><span style="color:#ff0000">&#x27;2025/05/29&#x27;</span><span style="color:#808080">)</span></span>
<span class="t" style='left:261.2px;top:127.7px;font-size:12.4px;line-height:16px;color:#1e1e1e;font-family:"Liberation Mono", monospace;-webkit-text-stroke:0.25px;'>1</span>
<span class="t" style='left:423.6px;top:144.6px;font-size:11px;line-height:16px;color:#1e1e1e;font-family:"Liberation Sans", sans-serif;letter-spacing:-0.170px;'>Function ufnGetProductListPrice(</span>
<span class="t" style='left:580.2px;top:144.6px;font-size:11px;line-height:16px;color:#1e1e1e;font-family:"Liberation Sans", sans-serif;font-weight:700;letter-spacing:0.416px;'>@ProductID int</span>
<span class="t" style='left:665.8px;top:144.6px;font-size:11px;line-height:16px;color:#1e1e1e;font-family:"Liberation Sans", sans-serif;letter-spacing:-0.034px;'>, @OrderDate datetime) returns money</span>
<span class="t" style='left:236px;top:620px;font-size:12px;line-height:16px;color:#1e1e1e;font-family:"Liberation Sans", sans-serif;letter-spacing:-0.465px;'>98 %</span>
<span class="t" style='left:346px;top:620px;font-size:12px;line-height:16px;color:#1e1e1e;font-family:"Liberation Sans", sans-serif;letter-spacing:-0.138px;'>No issues found</span>
<span class="t" style='left:756px;top:620px;font-size:12px;line-height:16px;color:#1e1e1e;font-family:"Liberation Sans", sans-serif;letter-spacing:-0.325px;'>Ln: 1, Ch: 53</span>
<span class="t" style='left:833px;top:620px;font-size:12px;line-height:16px;color:#1e1e1e;font-family:"Liberation Sans", sans-serif;letter-spacing:-0.988px;'>TABS</span>
<span class="t" style='left:872px;top:620px;font-size:12px;line-height:16px;color:#1e1e1e;font-family:"Liberation Sans", sans-serif;letter-spacing:-0.961px;'>CRLF</span>
<span class="t" style='left:912.6px;top:620px;font-size:12px;line-height:16px;color:#1e1e1e;font-family:"Liberation Sans", sans-serif;letter-spacing:-0.343px;'>Windows 1251</span>
<span class="t" style='left:252px;top:644px;font-size:12px;line-height:16px;color:#1e1e1e;font-family:"Liberation Sans", sans-serif;letter-spacing:-0.021px;'>Query executed successful...</span>
<span class="t" style='left:420.8px;top:644px;font-size:12px;line-height:16px;color:#1e1e1e;font-family:"Liberation Sans", sans-serif;letter-spacing:-0.225px;'>demo-mssql\sql2025 (17.0 RTM)</span>
<span class="t" style='left:602px;top:644px;font-size:12px;line-height:16px;color:#1e1e1e;font-family:"Liberation Sans", sans-serif;letter-spacing:-0.408px;'>sa (78)</span>
<span class="t" style='left:649px;top:644px;font-size:12px;line-height:16px;color:#1e1e1e;font-family:"Liberation Sans", sans-serif;letter-spacing:-0.177px;'>AdventureWorks2025</span>
<span class="t" style='left:774px;top:644px;font-size:12px;line-height:16px;color:#1e1e1e;font-family:"Liberation Sans", sans-serif;letter-spacing:-0.527px;'>00:00:00</span>
<span class="t" style='left:829px;top:644px;font-size:12px;line-height:16px;color:#1e1e1e;font-family:"Liberation Sans", sans-serif;letter-spacing:-0.348px;'>Row: 1, Col: 1</span>
<span class="t" style='left:913.6px;top:644px;font-size:12px;line-height:16px;color:#1e1e1e;font-family:"Liberation Sans", sans-serif;letter-spacing:-0.353px;'>19,119 rows</span>
<span class="t" style='left:35px;top:674px;font-size:12px;line-height:16px;color:#ffffff;font-family:"Liberation Sans", sans-serif;letter-spacing:-0.438px;'>Ready</span>
<span class="t" style='left:967.4px;top:678.2px;font-size:10.5px;line-height:16px;color:#fff;font-family:"Liberation Sans", sans-serif;font-weight:700;'>1</span>
</div>
</body></html>
